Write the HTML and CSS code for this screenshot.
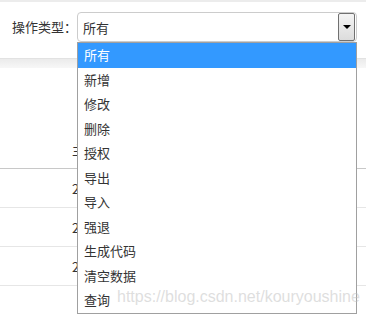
FILE: index.html
```html
<!DOCTYPE html>
<html lang="zh-CN">
  <head>
    <meta charset="UTF-8" />
    <meta name="viewport" content="width=device-width, initial-scale=1.0" />
    <title>操作日志</title>
    <link rel="stylesheet" href="styles.css">
  </head>
  <body>
    <div class="topline"></div>

    <div class="filter-bar">
      <label class="filter-label">操作类型：</label>
      <div class="select-wrap">
        <div class="select-box">
          <span class="select-value">所有</span>
          <span class="select-arrow"></span>
        </div>
        <ul class="select-list">
          <li class="active">所有</li>
          <li>新增</li>
          <li>修改</li>
          <li>删除</li>
          <li>授权</li>
          <li>导出</li>
          <li>导入</li>
          <li>强退</li>
          <li>生成代码</li>
          <li>清空数据</li>
          <li>查询</li>
        </ul>
      </div>
    </div>

    <div class="grid-head"></div>
    <div class="grid-gap"></div>

    <div class="grid">
      <div class="row head-row"><span class="cell-text">主机</span></div>
      <div class="row"><span class="cell-text">2019</span></div>
      <div class="row"><span class="cell-text">2019</span></div>
      <div class="row"><span class="cell-text">2019</span></div>
      <div class="row last"></div>
    </div>

    <div class="watermark">https://blog.csdn.net/kouryoushine</div>
  </body>
</html>
```

FILE: styles.css
```css
body {
  margin: 0;
  font-family: "Noto Sans CJK SC", "Liberation Sans", sans-serif;
  font-size: 13px;
  color: #333;
  background-color: #fff;
  position: relative;
  height: 321px;
  overflow: hidden;
}
.topline {
  height: 2px;
  background-color: #ececec;
}
.filter-bar {
  display: flex;
  align-items: flex-start;
  height: 56px;
  padding: 10px 0 0 12px;
  box-sizing: border-box;
}
.filter-label {
  line-height: 30px;
  width: 65px;
}
.select-wrap {
  position: relative;
  width: 280px;
  z-index: 2;
}
.select-box {
  display: flex;
  align-items: center;
  height: 30px;
  box-sizing: border-box;
  border: 1px solid #ccc;
  border-radius: 4px;
  padding-left: 5px;
}
.select-value {
  flex: 1;
}
.select-arrow {
  width: 17px;
  height: 28px;
  box-sizing: border-box;
  margin-right: 1px;
  border: 1px solid #707070;
  border-radius: 2px;
  background: linear-gradient(#f4f4f4, #dcdcdc);
  display: flex;
  align-items: center;
  justify-content: center;
}
.select-arrow::after {
  content: "";
  border-left: 4px solid transparent;
  border-right: 4px solid transparent;
  border-top: 4px solid #000;
}
.select-list {
  position: absolute;
  top: 30px;
  left: 0;
  width: 280px;
  box-sizing: border-box;
  margin: 0;
  padding: 0;
  list-style: none;
  background-color: #fff;
  border: 1px solid #a0a0a0;
}
.select-list li {
  height: 24.5px;
  line-height: 24.5px;
  padding-left: 6px;
}
.select-list li.active {
  background-color: #3399ff;
  color: #fff;
}
.grid-head {
  height: 10px;
  border-top: 1px solid #e2e2e2;
  box-sizing: border-box;
  background: linear-gradient(#ebebeb, #f7f7f7);
}
.grid-gap {
  height: 62px;
}
.row {
  height: 39px;
  box-sizing: border-box;
  border-bottom: 1px solid #e6e6e6;
  display: flex;
  align-items: center;
  padding-left: 72px;
}
.cell-text {
  display: inline-block;
  width: 5px;
  overflow: hidden;
  white-space: nowrap;
}
.head-row {
  border-bottom-color: #c8c8c8;
}
.row.last {
  border-bottom: none;
}
.watermark {
  position: absolute;
  left: 117px;
  top: 288px;
  font-family: "Liberation Sans", sans-serif;
  font-size: 16px;
  color: rgba(190, 190, 190, 0.5);
  z-index: 3;
  white-space: nowrap;
}
```
